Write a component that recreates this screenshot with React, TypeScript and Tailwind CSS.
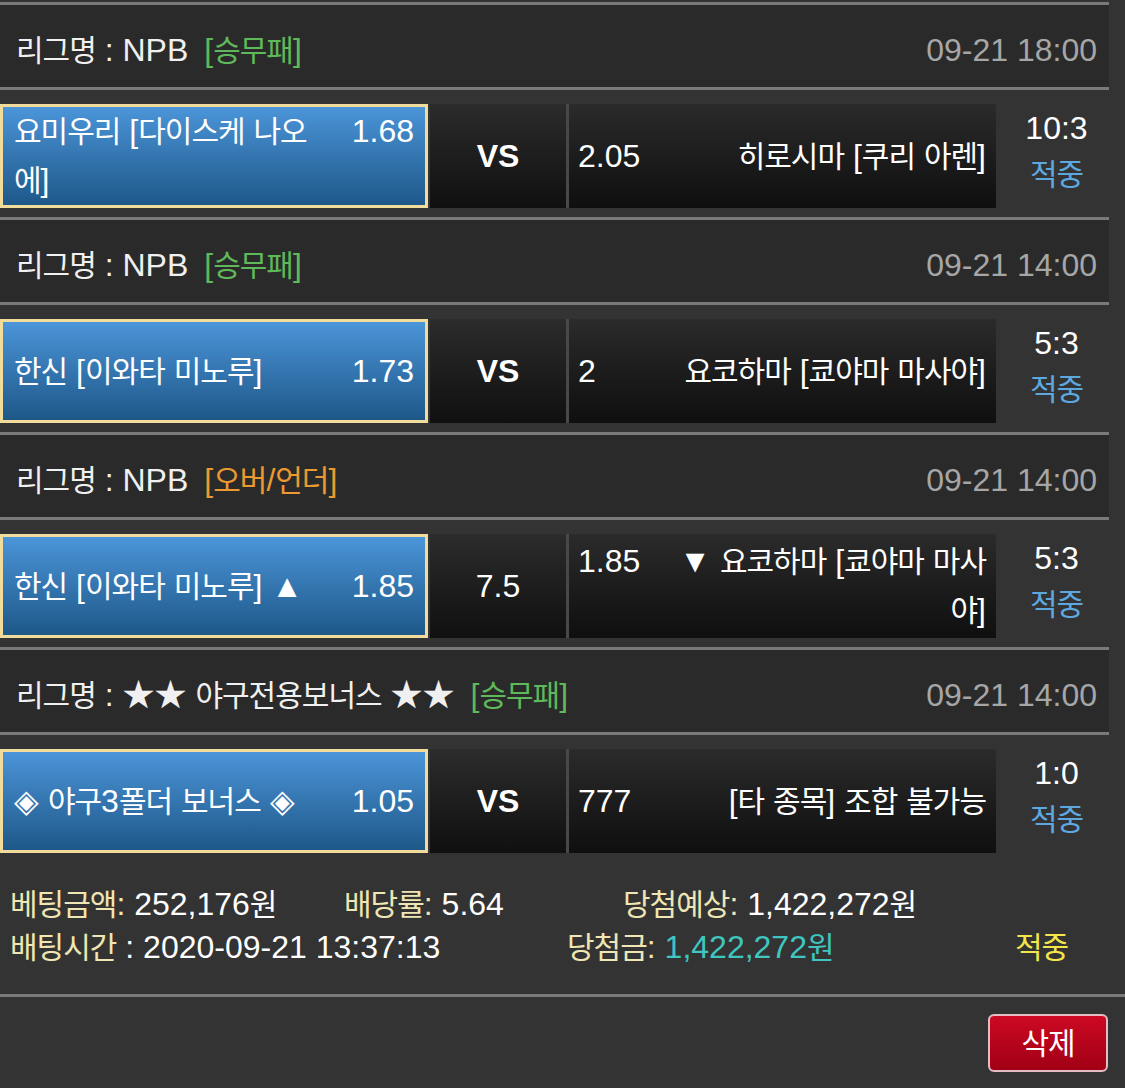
import React from "react";

type Side = { name: string; odds: string };

type Game = {
  league: string;
  kind: string;
  kindColor: string;
  time: string;
  home: Side;
  mid: string;
  midBold: boolean;
  away: Side;
  score: string;
};

const games: Game[] = [
  {
    league: "NPB",
    kind: "[승무패]",
    kindColor: "text-[#5fb85a]",
    time: "09-21 18:00",
    home: { name: "요미우리 [다이스케 나오에]", odds: "1.68" },
    mid: "VS",
    midBold: true,
    away: { name: "히로시마 [쿠리 아렌]", odds: "2.05" },
    score: "10:3",
  },
  {
    league: "NPB",
    kind: "[승무패]",
    kindColor: "text-[#5fb85a]",
    time: "09-21 14:00",
    home: { name: "한신 [이와타 미노루]", odds: "1.73" },
    mid: "VS",
    midBold: true,
    away: { name: "요코하마 [쿄야마 마사야]", odds: "2" },
    score: "5:3",
  },
  {
    league: "NPB",
    kind: "[오버/언더]",
    kindColor: "text-[#eb9a32]",
    time: "09-21 14:00",
    home: { name: "한신 [이와타 미노루] ▲", odds: "1.85" },
    mid: "7.5",
    midBold: false,
    away: { name: "▼ 요코하마 [쿄야마 마사야]", odds: "1.85" },
    score: "5:3",
  },
  {
    league: "★★ 야구전용보너스 ★★",
    kind: "[승무패]",
    kindColor: "text-[#5fb85a]",
    time: "09-21 14:00",
    home: { name: "◈ 야구3폴더 보너스 ◈", odds: "1.05" },
    mid: "VS",
    midBold: true,
    away: { name: "[타 종목] 조합 불가능", odds: "777" },
    score: "1:0",
  },
];

// hangul glyphs in Noto run a bit wide next to the reference, pull them in
function Ko({ text }: { text: string }) {
  const parts = text.split(/([\uAC00-\uD7A3]+)/);
  return (
    <>
      {parts.map((p, i) =>
        /[\uAC00-\uD7A3]/.test(p) ? (
          <span key={i} className="text-[30px] tracking-[-1px]">
            {p}
          </span>
        ) : (
          <React.Fragment key={i}>{p}</React.Fragment>
        )
      )}
    </>
  );
}

function Line({ full }: { full?: boolean }) {
  return <div className={full ? "h-[3px] bg-[#7a7a7a]" : "h-[3px] w-[1109px] bg-[#7a7a7a]"} />;
}

function GameBlock({ game, last }: { game: Game; last: boolean }) {
  return (
    <div>
      <Line />
      <div className="flex h-[82px] w-[1109px] items-center justify-between bg-[#2a2a2a] pl-4 pr-3 pt-2 leading-[40px]">
        <p className="text-[#f0f0f0]">
          <Ko text={`리그명 : ${game.league}`} />
          <span className={`ml-4 ${game.kindColor}`}>
            <Ko text={game.kind} />
          </span>
        </p>
        <p className="text-[#a6a6a6]">{game.time}</p>
      </div>
      <Line />
      <div className={`flex w-[1109px] pt-[14px] ${last ? "pb-[10px]" : "pb-[9px]"}`}>
        <div className="flex h-[104px] w-[428px] items-center border-[3px] border-[#f2dc9b] bg-gradient-to-b from-[#4b95d9] to-[#1e5889] pl-[11px] pr-[11px] leading-[48px] text-white">
          <div className="w-full">
            <span className="float-right ml-4">{game.home.odds}</span>
            <Ko text={game.home.name} />
          </div>
        </div>
        <div
          className={`ml-[2px] flex h-[104px] w-[136px] items-center justify-center bg-gradient-to-b from-[#2c2c2c] to-[#101010] text-white ${
            game.midBold ? "font-bold" : ""
          }`}
        >
          {game.mid}
        </div>
        <div className="flex h-[104px] w-[430px] items-center border-l-[3px] border-[#484848] bg-gradient-to-b from-[#2b2b2b] to-[#0f0f0f] pl-[9px] pr-[10px] leading-[48px] text-white">
          <div className="w-full text-right">
            <span className="float-left mr-6">{game.away.odds}</span>
            <Ko text={game.away.name} />
          </div>
        </div>
        <div className="flex h-[104px] flex-1 flex-col items-center justify-center pb-[10px] pl-2 leading-[46px]">
          <span className="text-white">{game.score}</span>
          <span className="text-[#5ea8e0]">
            <Ko text="적중" />
          </span>
        </div>
      </div>
    </div>
  );
}

export default function App() {
  return (
    <div className="min-h-[1088px] w-[1125px] bg-[#333333] pt-[2px] font-['Liberation_Sans','Noto_Sans_CJK_KR',sans-serif] text-[32px]">
      {games.map((g, i) => (
        <GameBlock key={i} game={g} last={i === games.length - 1} />
      ))}

      <div className="pl-[10px] pt-[20px] pb-[25px] leading-[43px] text-white">
        <div className="flex">
          <p className="w-[334px]">
            <span className="text-[#efe6b4]">
              <Ko text="베팅금액:" />
            </span>{" "}
            <Ko text="252,176원" />
          </p>
          <p className="w-[279px]">
            <span className="text-[#efe6b4]">
              <Ko text="배당률:" />
            </span>{" "}
            5.64
          </p>
          <p>
            <span className="text-[#efe6b4]">
              <Ko text="당첨예상:" />
            </span>{" "}
            <Ko text="1,422,272원" />
          </p>
        </div>
        <div className="flex">
          <p className="w-[557px]">
            <span className="text-[#efe6b4]">
              <Ko text="배팅시간" />
            </span>{" "}
            : 2020-09-21 13:37:13
          </p>
          <p className="w-[448px]">
            <span className="text-[#efe6b4]">
              <Ko text="당첨금:" />
            </span>{" "}
            <span className="text-[#3fc6c0]">
              <Ko text="1,422,272원" />
            </span>
          </p>
          <p className="text-[#f2e64a]">
            <Ko text="적중" />
          </p>
        </div>
      </div>

      <Line full />
      <div className="flex justify-end pr-[17px] pt-[17px]">
        <button className="flex h-[58px] w-[120px] items-center justify-center rounded-md border-2 border-[#e6bcc4] bg-gradient-to-b from-[#cc0a22] to-[#a10016] text-white">
          <Ko text="삭제" />
        </button>
      </div>
    </div>
  );
}
